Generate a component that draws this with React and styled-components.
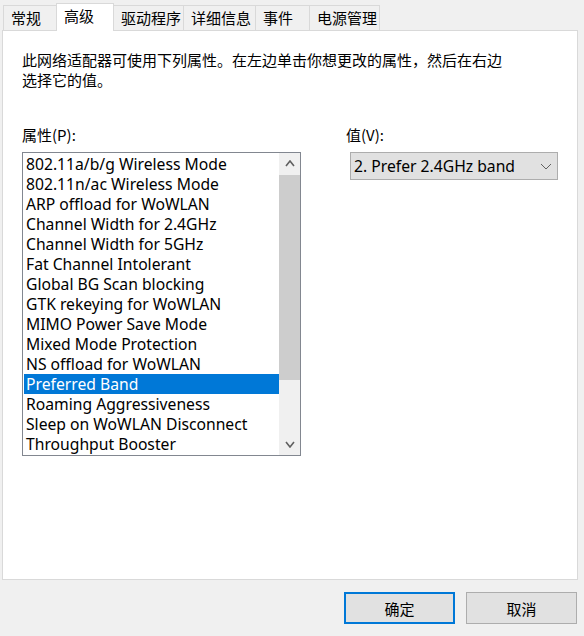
import React from "react";
import styled, { createGlobalStyle } from "styled-components";

const Global = createGlobalStyle`
  html, body { margin: 0; padding: 0; background: #f0f0f0; }
  body {
    font-family: "Noto Sans", "Noto Sans CJK SC", sans-serif;
    font-size: 15px;
    color: #000;
  }
  * { box-sizing: border-box; }
`;

const Window = styled.div`
  width: 584px;
  height: 636px;
  background: #f0f0f0;
  display: flex;
  flex-direction: column;
`;

const TabRow = styled.div`
  display: flex;
  align-items: flex-end;
  height: 30px;
  padding-left: 3px;
  position: relative;
  z-index: 1;
`;

const Tab = styled.div`
  width: ${(p) => p.$w}px;
  height: ${(p) => (p.$active ? 28 : 25)}px;
  margin-bottom: ${(p) => (p.$active ? -1 : 0)}px;
  margin-left: ${(p) => (p.$first ? 0 : -1)}px;
  border: 1px solid #d9d9d9;
  border-bottom: none;
  background: ${(p) => (p.$active ? "#fff" : "#f0f0f0")};
  position: relative;
  z-index: ${(p) => (p.$active ? 2 : 1)};
  padding-left: 7px;
  padding-top: 2px;
  font-family: "Noto Sans CJK SC", sans-serif;
  font-size: 15px;
  line-height: 20px;
  white-space: nowrap;
`;

const Panel = styled.div`
  margin-left: 2px;
  width: 576px;
  height: 550px;
  background: #fff;
  border: 1px solid #d9d9d9;
  padding: 19px 19px 0 19px;
`;

const Description = styled.p`
  margin: 0;
  width: 485px;
  font-family: "Noto Sans CJK SC", sans-serif;
  font-size: 15px;
  line-height: 20px;
`;

const Columns = styled.div`
  display: grid;
  grid-template-columns: 279px 1fr;
  column-gap: 45px;
  margin-top: 35px;
`;

const Column = styled.div`
  display: flex;
  flex-direction: column;
`;

const Label = styled.div`
  font-family: "Noto Sans CJK SC", sans-serif;
  font-size: 15px;
  line-height: 20px;
  margin-bottom: 7px;
`;

const ListBox = styled.div`
  width: 279px;
  height: 304px;
  border: 1px solid #828790;
  background: #fff;
  display: flex;
`;

const Rows = styled.div`
  flex: 1;
  min-width: 0;
  padding: 1px 0 0 1px;
  display: flex;
  flex-direction: column;
`;

const Row = styled.div`
  height: 20px;
  line-height: 20px;
  padding-left: 2px;
  font-size: 15.7px;
  white-space: nowrap;
  overflow: hidden;
  background: ${(p) => (p.$selected ? "#0078d7" : "transparent")};
  color: ${(p) => (p.$selected ? "#fff" : "#000")};
`;

const ScrollBar = styled.div`
  width: 21px;
  background: #f0f0f0;
  display: flex;
  flex-direction: column;
`;

const ScrollButton = styled.div`
  height: 21px;
  display: flex;
  align-items: center;
  justify-content: center;
`;

const Track = styled.div`
  flex: 1;
  padding-top: 1px;
`;

const Thumb = styled.div`
  height: 205px;
  background: #cdcdcd;
`;

const Select = styled.div`
  margin-left: 4px;
  width: 208px;
  height: 28px;
  background: #e1e1e1;
  border: 1px solid #adadad;
  display: flex;
  align-items: center;
  justify-content: space-between;
  padding: 0 5px 0 3px;
  font-size: 15.7px;
`;

const Footer = styled.div`
  display: flex;
  justify-content: flex-end;
  gap: 11px;
  padding-right: 7px;
  margin-top: 12px;
`;

const Button = styled.div`
  width: 111px;
  height: 32px;
  background: #e1e1e1;
  border: ${(p) => (p.$default ? "2px solid #0078d7" : "1px solid #adadad")};
  display: flex;
  align-items: center;
  justify-content: center;
  font-family: "Noto Sans CJK SC", sans-serif;
  font-size: 15px;
`;

const Chevron = ({ up, w = 8, h = 5, stroke = 1.6 }) => (
  <svg width={w + 2} height={h + 2} viewBox={`-1 -1 ${w + 2} ${h + 2}`}>
    <polyline
      points={up ? `0,${h} ${w / 2},0 ${w},${h}` : `0,0 ${w / 2},${h} ${w},0`}
      fill="none"
      stroke="#606060"
      strokeWidth={stroke}
    />
  </svg>
);

const tabs = [
  { t: "常规", w: 54 },
  { t: "高级", w: 58, active: true },
  { t: "驱动程序", w: 71 },
  { t: "详细信息", w: 73 },
  { t: "事件", w: 55 },
  { t: "电源管理", w: 71 },
];

const items = [
  "802.11a/b/g Wireless Mode",
  "802.11n/ac Wireless Mode",
  "ARP offload for WoWLAN",
  "Channel Width for 2.4GHz",
  "Channel Width for 5GHz",
  "Fat Channel Intolerant",
  "Global BG Scan blocking",
  "GTK rekeying for WoWLAN",
  "MIMO Power Save Mode",
  "Mixed Mode Protection",
  "NS offload for WoWLAN",
  "Preferred Band",
  "Roaming Aggressiveness",
  "Sleep on WoWLAN Disconnect",
  "Throughput Booster",
];

export default function App() {
  return (
    <Window>
      <Global />
      <TabRow>
        {tabs.map((tab, i) => (
          <Tab key={tab.t} $w={tab.w} $active={tab.active} $first={i === 0}>
            {tab.t}
          </Tab>
        ))}
      </TabRow>
      <Panel>
        <Description>
          此网络适配器可使用下列属性。在左边单击你想更改的属性，然后在右边选择它的值。
        </Description>
        <Columns>
          <Column>
            <Label>属性(P):</Label>
            <ListBox>
              <Rows>
                {items.map((it) => (
                  <Row key={it} $selected={it === "Preferred Band"}>
                    {it}
                  </Row>
                ))}
              </Rows>
              <ScrollBar>
                <ScrollButton>
                  <Chevron up />
                </ScrollButton>
                <Track>
                  <Thumb />
                </Track>
                <ScrollButton>
                  <Chevron />
                </ScrollButton>
              </ScrollBar>
            </ListBox>
          </Column>
          <Column>
            <Label>值(V):</Label>
            <Select>
              <span>2. Prefer 2.4GHz band</span>
              <Chevron w={10} h={5} stroke={1} />
            </Select>
          </Column>
        </Columns>
      </Panel>
      <Footer>
        <Button $default>确定</Button>
        <Button>取消</Button>
      </Footer>
    </Window>
  );
}
